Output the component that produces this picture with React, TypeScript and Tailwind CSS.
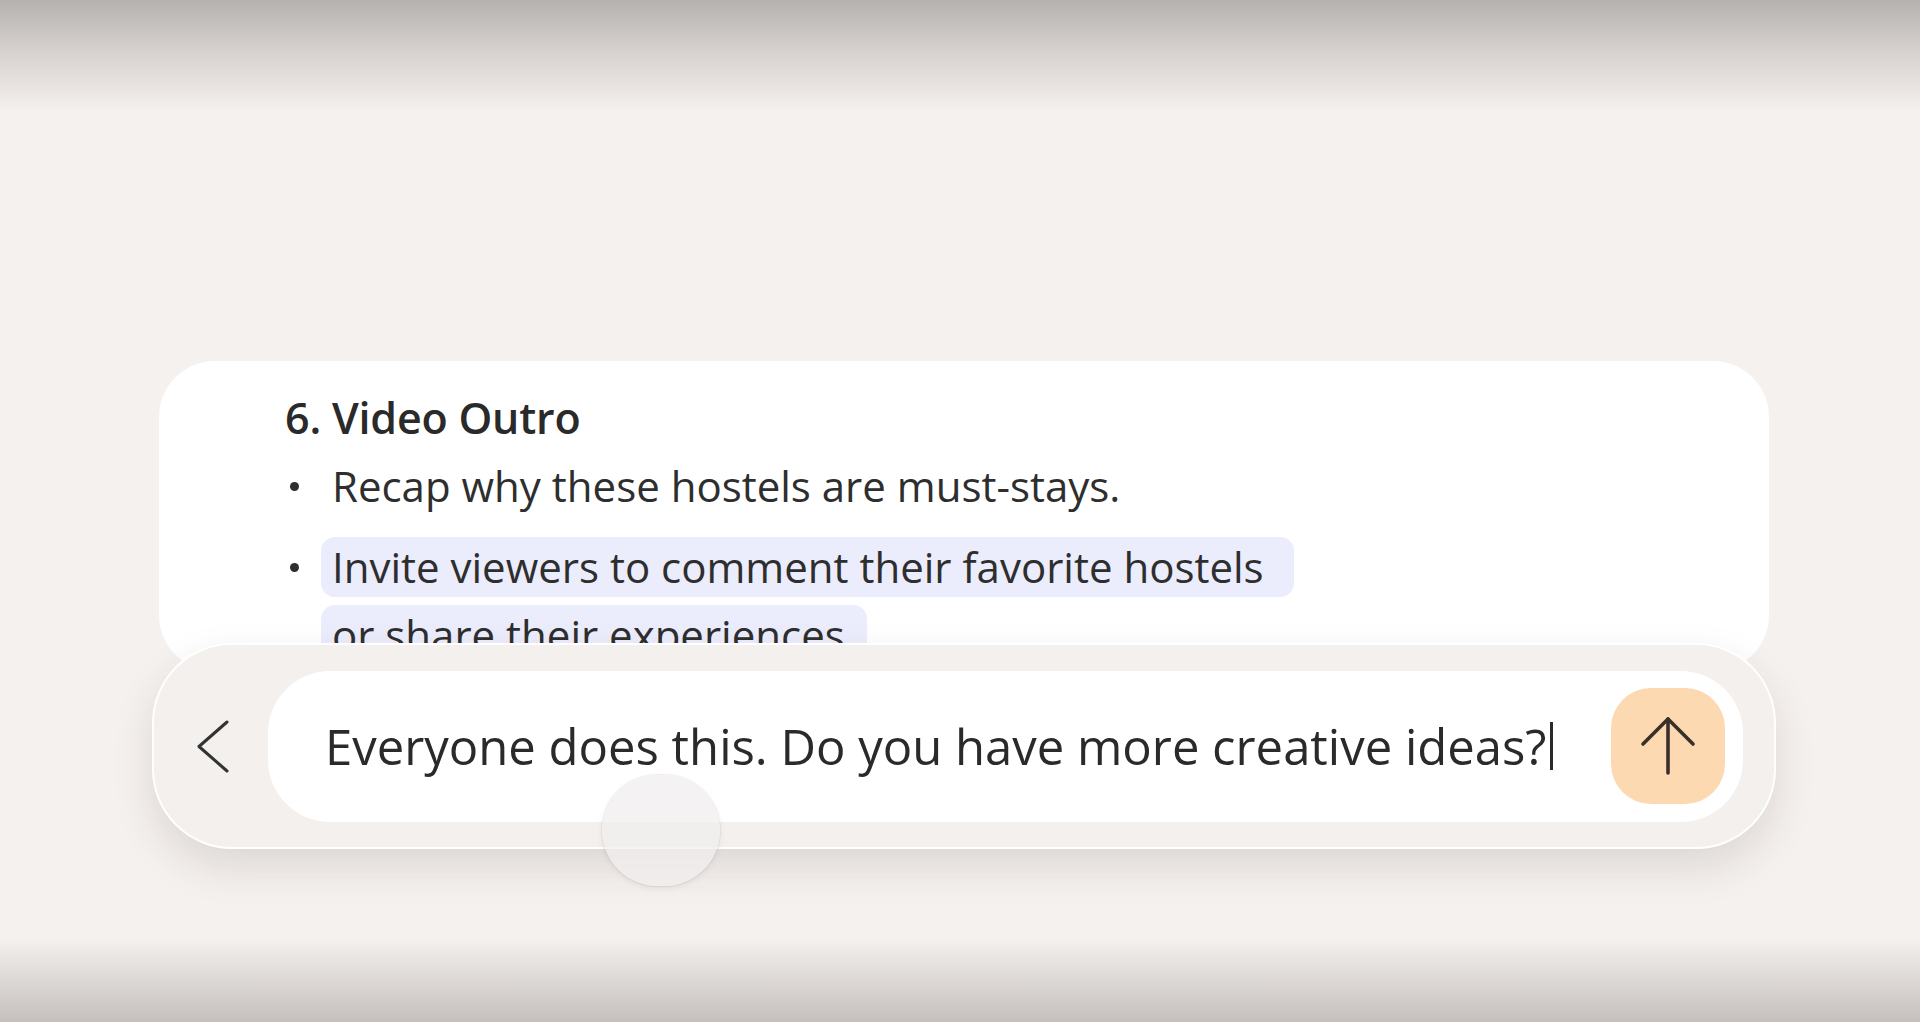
const font = { fontFamily: "'Open Sans', 'Noto Sans', sans-serif" };

/* ─── Respuesta del asistente (recortada por la barra) ─── */
function AnswerCard() {
  return (
    <div className="mx-[7px] h-[310px] overflow-hidden rounded-[56px] bg-white pl-[126px] pt-[33px]">
      <h2 className="text-[43px] leading-[48px] font-semibold tracking-[-0.2px] text-[#2a2a2a]">6. Video Outro</h2>

      <div className="mt-[14px] flex flex-col gap-[21px] text-[42px] leading-[60px] text-[#2e2e2e]">
        <div className="flex items-start">
          <span className="mt-[26px] mr-[22px] ml-[5px] h-[9px] w-[9px] shrink-0 rounded-full bg-[#2e2e2e]" />
          <span className="px-[11px]">Recap why these hostels are must-stays.</span>
        </div>

        <div className="flex items-start">
          <span className="mt-[26px] mr-[22px] ml-[5px] h-[9px] w-[9px] shrink-0 rounded-full bg-[#2e2e2e]" />
          <div className="flex flex-col items-start gap-[8px]">
            <span className="rounded-[14px] bg-[#ebecfc] pr-[30px] pl-[11px]">Invite viewers to comment their favorite hostels</span>
            <span className="rounded-[14px] bg-[#ebecfc] px-[11px]">or share their experiences.</span>
          </div>
        </div>
      </div>
    </div>
  );
}

/* ─── Barra de entrada ─── */
function InputBar() {
  return (
    <div className="relative z-10 -mt-[28px] flex h-[206px] items-center rounded-[80px] border-2 border-white bg-[#f3f0ee] pr-[31px] shadow-[0_18px_40px_rgba(60,50,45,0.13)]">
      <div className="flex w-[114px] shrink-0 justify-center pl-[4px]">
        <svg width="34" height="55" viewBox="0 0 34 55" fill="none" stroke="#333" strokeWidth="3" strokeLinecap="round" strokeLinejoin="round">
          <path d="M31 3 L3 27.5 L31 52" />
        </svg>
      </div>

      <div className="flex h-[151px] flex-1 items-center rounded-[62px] bg-white pr-[18px] pl-[57px]">
        <p className="flex flex-1 items-center text-[49px] leading-none text-[#2a2a2a]">
          Everyone does this. Do you have more creative ideas?
          <span className="ml-[3px] inline-block h-[48px] w-[3px] bg-[#2a2a2a]" />
        </p>

        <button className="flex h-[116px] w-[114px] items-center justify-center rounded-[40px] bg-[#fdd9b2]">
          <svg width="56" height="62" viewBox="0 0 56 62" fill="none" stroke="#3a302a" strokeWidth="3.6" strokeLinecap="round" strokeLinejoin="round">
            <path d="M28 4 V58" />
            <path d="M3 29 L28 4 L53 29" />
          </svg>
        </button>
      </div>
    </div>
  );
}

export default function App() {
  return (
    <div className="relative flex h-[1022px] w-full flex-col overflow-hidden bg-[#f5f1ee]" style={font}>
      {/* sombra superior del sistema */}
      <div className="h-[112px] shrink-0 bg-gradient-to-b from-[#b6b2af] via-[#d9d4d1] to-[#f5f1ee]" />

      <div className="mt-[249px] ml-[152px] w-[1624px]">
        <AnswerCard />
        <InputBar />
      </div>

      <div className="flex-1" />

      {/* sombra inferior */}
      <div className="h-[84px] shrink-0 bg-gradient-to-b from-[#f5f1ee] to-[#c5c0bd]" />

      {/* indicador táctil */}
      <div className="absolute top-[775px] left-[602px] z-20 h-[111px] w-[118px] rounded-full bg-[#f0eeed]/75 shadow-[0_2px_6px_rgba(0,0,0,0.07)] ring-1 ring-black/5" />
    </div>
  );
}
